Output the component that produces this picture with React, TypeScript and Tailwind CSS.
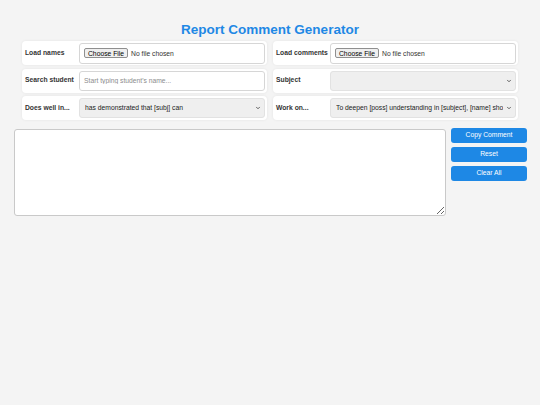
import { ChevronDown } from "lucide-react";

const card =
  "bg-white rounded-[4px] shadow-[0_0_3px_rgba(0,0,0,0.07)] h-[24px] flex items-center pl-[3px] pr-[2px]";
const label = "w-[54px] shrink-0 text-[6.75px] font-bold text-[#333]";
const field =
  "flex-1 min-w-0 h-[20px] border border-[#d6d6d6] rounded-[3px] bg-white px-[4px] text-[6.75px] text-[#333] outline-none";
const fileField =
  "block flex-1 min-w-0 py-[4px] border border-[#d6d6d6] rounded-[3px] bg-white px-[4px] text-[6.75px] leading-[10px] text-[#333] file:h-[10px] file:px-[3px] file:mr-[3px] file:bg-[#efefef] file:border file:border-[#8f8f8f] file:rounded-[2px] file:text-[6.75px] file:text-black";

function Select({ value }: { value: string }) {
  return (
    <div className="relative flex-1 min-w-0 h-[20px] flex">
      <select
        defaultValue={value}
        className="block w-full h-[20px] appearance-none bg-[#efefef] border border-[#e2e2e2] rounded-[3px] pl-[5px] pr-[12px] py-0 text-[6.75px] text-[#222] outline-none"
      >
        <option value={value}>{value}</option>
      </select>
      <ChevronDown
        className="absolute right-[4px] top-[7px] w-[6px] h-[6px] text-[#333] pointer-events-none"
        strokeWidth={3}
      />
    </div>
  );
}

export default function App() {
  return (
    <div className="min-h-screen bg-[#f4f4f4] font-['Liberation_Sans',Arial,sans-serif] px-[13px] pt-[22px]">
      <h1 className="text-center text-[13.5px] leading-[16px] font-bold text-[#1e88e5] mb-[3px]">
        Report Comment Generator
      </h1>

      <div className="grid grid-cols-2 gap-x-[6px] gap-y-[3.5px] px-[9px]">
        <div className={card}>
          <span className={label}>Load names</span>
          <input type="file" className={fileField} />
        </div>
        <div className={card}>
          <span className={label}>Load comments</span>
          <input type="file" className={fileField} />
        </div>
        <div className={card}>
          <span className={label}>Search student</span>
          <input
            type="text"
            placeholder="Start typing student's name..."
            className={field + " placeholder:text-[#8c8c8c]"}
          />
        </div>
        <div className={card}>
          <span className={label}>Subject</span>
          <Select value="" />
        </div>
        <div className={card}>
          <span className={label}>Does well in...</span>
          <Select value="has demonstrated that [subj] can" />
        </div>
        <div className={card}>
          <span className={label}>Work on...</span>
          <Select value="To deepen [poss] understanding in [subject], [name] should" />
        </div>
      </div>

      <div className="flex items-start gap-[5px] mt-[8px]">
        <textarea className="flex-1 h-[87px] mt-[1px] ml-[1px] border border-[#c9c9c9] rounded-[3px] bg-white outline-none" />
        <div className="w-[76px] flex flex-col gap-[4px]">
          <button className="h-[15px] rounded-[3px] bg-[#1e88e5] text-white text-[6.75px]">
            Copy Comment
          </button>
          <button className="h-[15px] rounded-[3px] bg-[#1e88e5] text-white text-[6.75px]">
            Reset
          </button>
          <button className="h-[15px] rounded-[3px] bg-[#1e88e5] text-white text-[6.75px]">
            Clear All
          </button>
        </div>
      </div>
    </div>
  );
}
